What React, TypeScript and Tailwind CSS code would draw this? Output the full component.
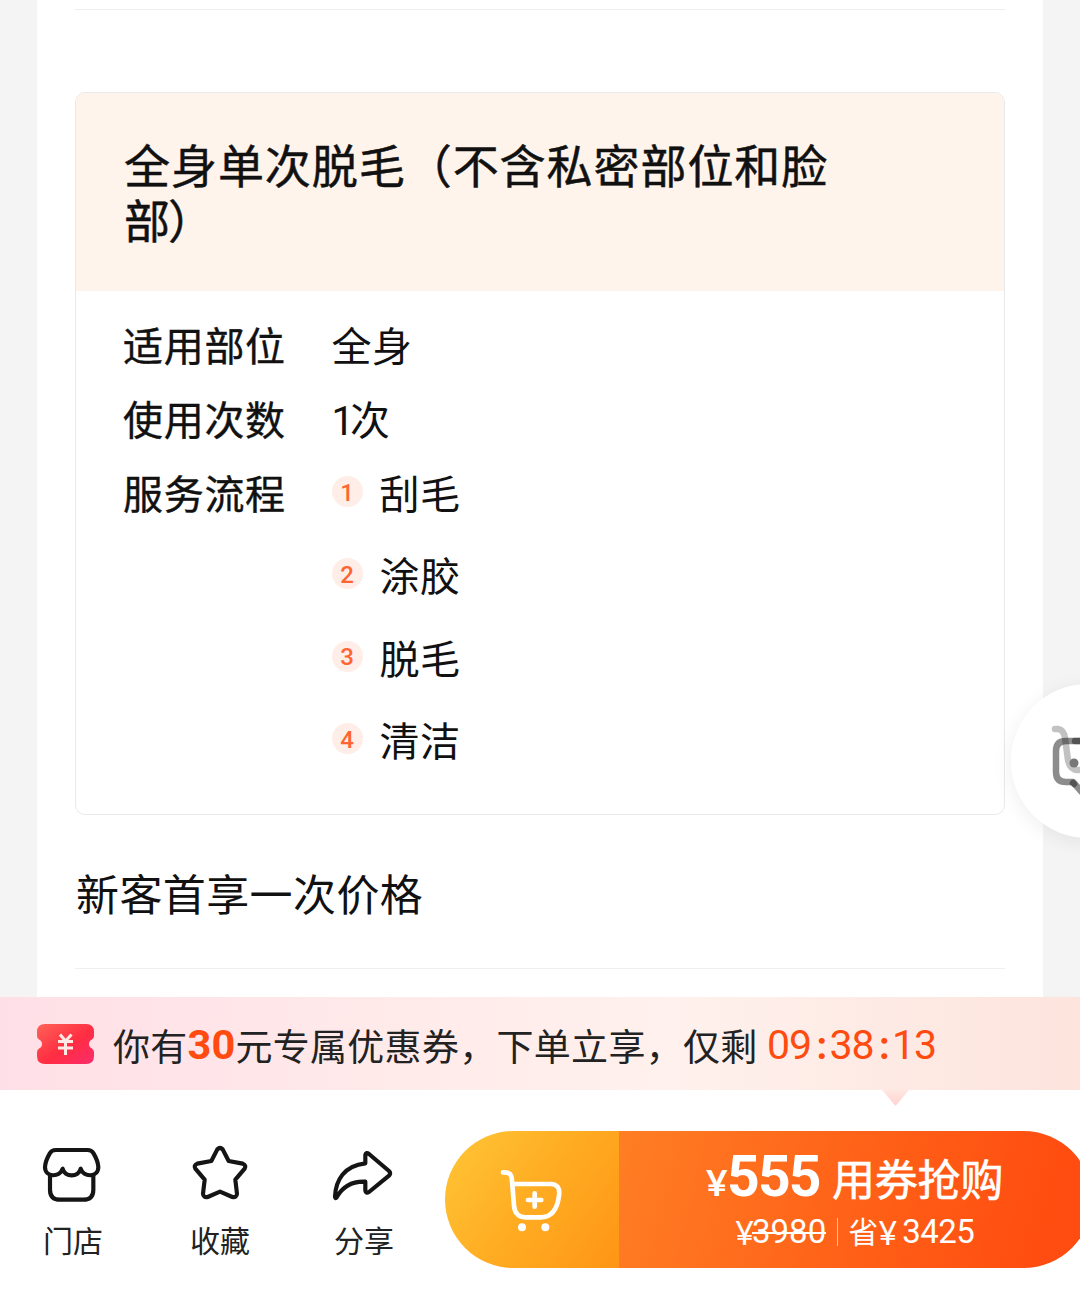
import React from "react";

const steps = ["刮毛", "涂胶", "脱毛", "清洁"];

function Row({ label, children }: { label: string; children: React.ReactNode }) {
  return (
    <div className="flex h-[58px] items-start">
      <div className="w-[208.500px] shrink-0 text-[40px] leading-[58px] tracking-[0.7px] [-webkit-text-stroke:0.4px_#111]">{label}</div>
      <div className="text-[40px] leading-[58px] tracking-[0.4px]">{children}</div>
    </div>
  );
}

function NavItem({ label, viewBox, children }: { label: string; viewBox: string; children: React.ReactNode }) {
  return (
    <div className="flex w-[70px] shrink-0 flex-col items-center">
      <svg width="70" height="70" viewBox={viewBox} fill="none" stroke="#151515" strokeWidth="12.5" strokeLinejoin="round" strokeLinecap="round">
        {children}
      </svg>
      <div className="mt-[8px] text-[30px] leading-[44px] whitespace-nowrap text-[#222]">{label}</div>
    </div>
  );
}

function Digits({ value }: { value: string }) {
  return (
    <>
      {value.split("").map((c, i) => (
        <span key={i} className={c === ":" ? "flex w-[18.500px] justify-center pl-[2px] text-[38px] font-bold" : "flex w-[22px] justify-center"}>
          {c}
        </span>
      ))}
    </>
  );
}

export default function App() {
  return (
    <div className="relative flex h-[1293px] w-[1080px] flex-col overflow-hidden bg-[#f4f4f4] font-['Noto_Sans_CJK_SC',sans-serif] text-[#111]">
      <main className="mx-[37px] h-[997px] shrink-0 bg-white px-[38px] pt-[9px]">
        <div className="h-px bg-[#efefef]" />
        <section className="mt-[82px] h-[723px] overflow-hidden rounded-[10px] border border-[#e9e9e9] bg-white">
          <h1 className="h-[198px] bg-[#fff4ec] pt-[43px] pl-[48px] text-[46px] leading-[55px] font-normal tracking-[0.950px] [-webkit-text-stroke:0.5px_#111]">
            全身单次脱毛（不含私密部位和脸
            <br />
            部<span className="-ml-[3px]">）</span>
          </h1>
          <div className="flex flex-col gap-[16px] pt-[24px] pl-[47px]">
            <Row label="适用部位">全身</Row>
            <Row label="使用次数">
              <span className="font-['Roboto',sans-serif] tracking-[-4px]">1</span>次
            </Row>
            <Row label="服务流程">
              <ol className="flex flex-col gap-[24.4px]">
                {steps.map((s, i) => (
                  <li key={s} className="flex items-center">
                    <span className="mr-[17px] mb-[1px] flex size-[31px] items-center justify-center rounded-full bg-[#ffeee8] pt-[2px] font-['Roboto',sans-serif] text-[24px] leading-none font-medium tracking-normal text-[#ff6433]">
                      {i + 1}
                    </span>
                    {s}
                  </li>
                ))}
              </ol>
            </Row>
          </div>
        </section>
        <p className="mt-[45px] pl-px text-[43px] leading-[64px] tracking-[0.4px]">新客首享一次价格</p>
        <div className="mt-[44px] h-px bg-[#efefef]" />
      </main>

      <div className="relative flex h-[93px] shrink-0 items-center bg-[linear-gradient(90deg,#ffdfe7_0%,#ffeaea_35%,#fff1ed_62%,#fde4dd_100%)] pl-[37px] text-[37px] text-[#222]">
        <svg width="57" height="40" viewBox="0 0 57 40" className="shrink-0">
          <defs>
            <linearGradient id="ticket" x1="0" y1="0" x2="1" y2="1">
              <stop offset="0" stopColor="#ff6257" />
              <stop offset="0.55" stopColor="#ff2d42" />
              <stop offset="1" stopColor="#fb2c6c" />
            </linearGradient>
          </defs>
          <path d="M8 0H49Q57 0 57 8V12Q57 14 55 15.5Q52 17 52 20T55 24.5Q57 26 57 28V32Q57 40 49 40H8Q0 40 0 32V28Q0 26 2 24.5Q5 23 5 20T2 15.5Q0 14 0 12V8Q0 0 8 0Z" fill="url(#ticket)" />
          <path d="M23 10.500L28.500 17L34.500 10.500M21 17.500H36M21 24H36M28.500 17V31" stroke="#ffe9e4" strokeWidth="3" fill="none" />
        </svg>
        <div className="mt-[4px] ml-[19px] flex h-[54px] items-center whitespace-nowrap">
          <span className="tracking-[0.2px]">你有</span>
          <b className="w-[48px] text-center font-['Roboto',sans-serif] text-[41.500px] font-bold text-[#ff4b10]">30</b>
          <span className="tracking-[0.3px]">元专属优惠券，下单立享，仅剩</span>
        </div>
        <div className="mt-[4px] ml-[10px] flex items-center font-['Roboto',sans-serif] text-[41px] leading-none text-[#ff4b10]">
          <Digits value="09:38:13" />
        </div>
        <div className="absolute top-[93px] left-[882px] h-[16px] w-[27px] bg-[linear-gradient(180deg,#ffe6e1,#ffd3cf)] [clip-path:polygon(0_0,100%_0,50%_100%)]" />
      </div>

      <footer className="flex h-[203px] shrink-0 bg-white">
        <nav className="flex pt-[49px] pl-[38px]">
          <NavItem label="门店" viewBox="54 26 210 210">
            <path d="M108 59H202Q216 59 221 70Q234 92 235 110C235 142 190 142 182 115C176 142 134 142 128 115C120 142 75 142 75 110Q76 92 89 70Q94 59 108 59Z" />
            <path d="M90 135V178Q90 208 120 208H190Q220 208 220 178V135" />
          </NavItem>
          <div className="w-[77px]" />
          <NavItem label="收藏" viewBox="495 26 210 210">
            <path d="M592 57Q600 49 608 57L626 92L668 100Q680 105 674 115L646 148L651 190Q650 203 637 200L600 184L563 200Q550 203 549 190L554 148L526 115Q520 105 532 100L574 92Z" />
          </NavItem>
          <div className="w-[74px]" />
          <NavItem label="分享" viewBox="927 26 210 210">
            <path d="M1036 99V74Q1038 64 1047 71L1107 122Q1114 129 1107 136L1047 185Q1037 191 1036 181V154C990 152 966 172 950 201Q946 206 945 199C947 150 972 106 1036 99Z" />
          </NavItem>
        </nav>
        <div className="mt-[41px] ml-[46px] flex h-[137px] w-[647px] shrink-0 overflow-hidden rounded-full text-white">
          <button className="flex w-[174px] shrink-0 bg-[linear-gradient(125deg,#ffc233_8%,#ffac22_50%,#ff9515_100%)] pt-[36px] pl-[52px]">
            <svg width="66" height="68" viewBox="201 169 198 204" fill="none" stroke="#fff" strokeWidth="14" strokeLinecap="round" strokeLinejoin="round">
              <path d="M219 185C239 184 245 191 246 210L252 285Q255 320 287 320H331C366 320 382 296 387 255Q392 220 361 220H247" />
              <path d="M314 248V288M294 268H334" />
              <circle cx="276" cy="350" r="12" fill="#fff" stroke="none" />
              <circle cx="346" cy="350" r="12" fill="#fff" stroke="none" />
            </svg>
          </button>
          <button className="flex flex-1 flex-col bg-[linear-gradient(105deg,#ff7e24_0%,#ff6419_45%,#ff4c10_90%)] text-left whitespace-nowrap">
            <div className="flex h-[77px] items-baseline pt-[18px] pl-[87px] leading-[56px]">
              <span className="w-[21px] font-['Lato',sans-serif] text-[37px] font-bold">¥</span>
              <span className="w-[105px] font-['Roboto',sans-serif] text-[57px] font-bold tracking-[-1.800px]">555</span>
              <span className="text-[43px] tracking-[-0.2px] [-webkit-text-stroke:0.6px_#fff]">用券抢购</span>
            </div>
            <div className="flex h-[48px] items-center pl-[116px] font-['Roboto',sans-serif] text-[33px] leading-[40px]">
              <span className="w-[17px] font-['Lato',sans-serif]">¥</span>
              <span className="relative">
                3980
                <i className="absolute top-[20px] left-0 h-[2px] w-full bg-white" />
              </span>
              <span className="mr-[10px] ml-[11px] h-[28px] w-px bg-white/60" />
              <span className="pb-[4px] font-['Noto_Sans_CJK_SC',sans-serif] text-[30px]">省</span>
              <span className="w-[24px] font-['Lato',sans-serif]">¥</span>
              <span className="tracking-[-0.5px]">3425</span>
            </div>
          </button>
        </div>
      </footer>

      <div className="absolute top-[684px] left-[1011px] size-[154px] rounded-full bg-white/95 shadow-[0_4px_20px_rgba(0,0,0,0.07)]">
        <svg width="69" height="154" viewBox="1011 684 69 154" fill="none" strokeWidth="6.500" strokeLinecap="round" strokeLinejoin="round">
          <path d="M1055 729H1058Q1064 730 1065 738L1068 760Q1070 770 1078 770H1090" stroke="#000" strokeOpacity="0.24" />
          <path d="M1090 741H1066Q1056 741 1056 751V772Q1056 782 1066 782H1073L1086 797" stroke="#000" strokeOpacity="0.45" />
          <path d="M1075 741H1090M1073 783L1074 784" stroke="#000" strokeOpacity="0.4" />
          <circle cx="1074" cy="763" r="4.500" fill="#777" />
        </svg>
      </div>
    </div>
  );
}
